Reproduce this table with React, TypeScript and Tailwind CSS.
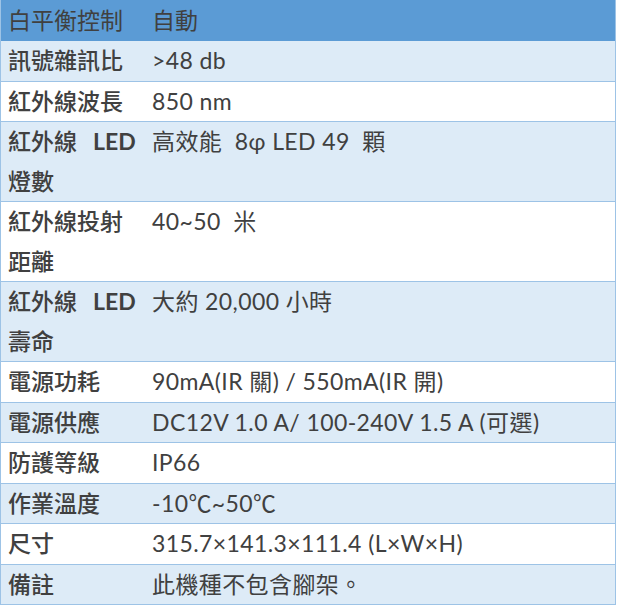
import React from "react";

type Row = { label: React.ReactNode; value: React.ReactNode };

const rows: Row[] = [
  { label: "訊號雜訊比", value: ">48 db" },
  { label: "紅外線波長", value: "850 nm" },
  {
    label: (
      <>
        <div>
          紅外線<span className="ml-[16px] font-bold">LED</span>
        </div>
        <div>燈數</div>
      </>
    ),
    value: <span className="whitespace-pre">高效能  8φ LED 49  顆</span>,
  },
  {
    label: (
      <>
        <div>紅外線投射</div>
        <div>距離</div>
      </>
    ),
    value: <span className="whitespace-pre">40~50  米</span>,
  },
  {
    label: (
      <>
        <div>
          紅外線<span className="ml-[16px] font-bold">LED</span>
        </div>
        <div>壽命</div>
      </>
    ),
    value: "大約 20,000 小時",
  },
  { label: "電源功耗", value: "90mA(IR 關) / 550mA(IR 開)" },
  { label: "電源供應", value: "DC12V 1.0 A/ 100-240V 1.5 A (可選)" },
  { label: "防護等級", value: "IP66" },
  { label: "作業溫度", value: "-10℃~50℃" },
  { label: "尺寸", value: "315.7×141.3×111.4 (L×W×H)" },
  { label: "備註", value: "此機種不包含腳架。" },
];

export default function App() {
  return (
    <div
      className="w-[617px] h-[607px] bg-white text-[#404040] text-[23px]"
      style={{ fontFamily: "Lato, 'Noto Sans CJK TC', sans-serif" }}
    >
      <div className="w-[616px] border-x border-b border-[#9dc3e6]">
        <div className="flex h-[41px] bg-[#5b9bd5] items-center">
          <div className="w-[145px] pl-[7px] shrink-0">白平衡控制</div>
          <div className="pl-[6px]">自動</div>
        </div>
        {rows.map((r, i) => (
          <div
            key={i}
            className={`flex leading-[39.5px] ${i < rows.length - 1 ? "border-b border-[#9dc3e6]" : ""} ${
              i % 2 === 0 ? "bg-[#ddebf7]" : "bg-white"
            }`}
          >
            <div className="w-[145px] pl-[7px] shrink-0 font-medium">{r.label}</div>
            <div className="pl-[6px] tracking-[0.4px]">{r.value}</div>
          </div>
        ))}
      </div>
    </div>
  );
}
